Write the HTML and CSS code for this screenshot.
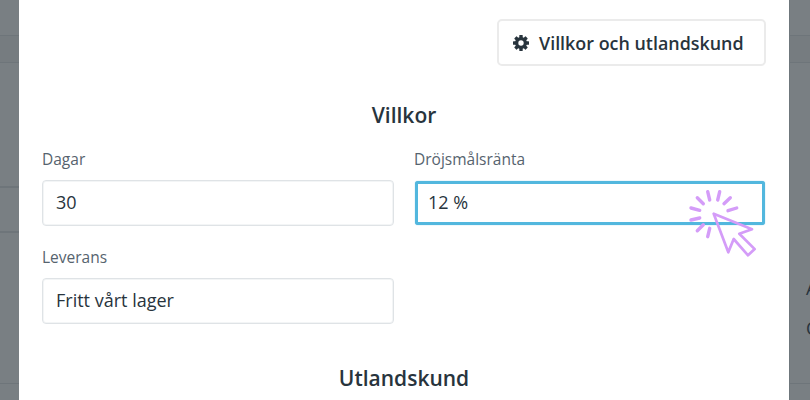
FILE: index.html
```html
<!DOCTYPE html>
<html lang="sv">
  <head>
    <meta charset="UTF-8" />
    <meta name="viewport" content="width=device-width, initial-scale=1.0" />
    <link rel="stylesheet" href="styles.css">
    <title>Villkor och utlandskund</title>
  </head>

  <body>
    <!-- Dimmed page behind the modal -->
    <div class="backdrop left">
      <div class="row header"></div>
      <div class="row toolbar"></div>
      <div class="row intro"></div>
      <div class="row heading"></div>
      <div class="row content"></div>
    </div>

    <div class="modal">
      <div class="actions">
        <button type="button" class="btn">
          <svg class="gear" viewBox="-8 -8 16 16">
            <g fill="currentColor">
              <rect x="-1.7" y="-8" width="3.4" height="16" rx="0.5" />
              <rect x="-1.7" y="-8" width="3.4" height="16" rx="0.5" transform="rotate(45)" />
              <rect x="-1.7" y="-8" width="3.4" height="16" rx="0.5" transform="rotate(90)" />
              <rect x="-1.7" y="-8" width="3.4" height="16" rx="0.5" transform="rotate(135)" />
              <circle r="6" />
            </g>
            <circle r="2.7" fill="#fff" />
          </svg>
          <span>Villkor och utlandskund</span>
        </button>
      </div>

      <h2>Villkor</h2>
      <form class="fields">
        <div class="field">
          <label for="dagar">Dagar</label>
          <input type="text" id="dagar" value="30" />
        </div>
        <div class="field">
          <label for="ranta">Dröjsmålsränta</label>
          <input type="text" id="ranta" class="active" value="12 %" />
        </div>
        <div class="field">
          <label for="leverans">Leverans</label>
          <input type="text" id="leverans" value="Fritt vårt lager" />
        </div>
      </form>

      <h2>Utlandskund</h2>
    </div>

    <div class="backdrop right">
      <div class="row header"></div>
      <div class="row toolbar"></div>
      <div class="row content">
        <p>A</p>
        <p>O</p>
      </div>
    </div>

    <svg class="pointer" viewBox="0 0 75 75">
      <path class="rays" d="M22.7 6.7l2 8.3M34.7 6.7l-2 8.3M45.3 12.7l-6.3 6M51.7 23l-8.7 2.7M12.3 12.7l6 6M6 23l8.7 2.3M6 35l8.7-2M12.3 45.7l6-6M22.7 51.7l2-8.4" />
      <path class="arrow" d="M28.7 28.7L67 44.3l-12.7 4.4 15.4 15.4-6.7 6.2L48.7 54l-5.4 13.3z" />
    </svg>
  </body>
</html>
```

FILE: styles.css
```css
* {
  box-sizing: border-box;
}

body {
  margin: 0;
  display: flex;
  height: 400px;
  overflow: hidden;
  background-color: #797f83;
  color: #28343d;
  font-family: "Open Sans", sans-serif;
}

.backdrop {
  display: flex;
  flex-direction: column;
  flex: none;
  width: 19px;
  overflow: hidden;
}

.backdrop.right {
  width: 21px;
  border-left: 1px solid #6f777c;
}

.row {
  flex: none;
  border-bottom: 1px solid #6e757a;
}

.header {
  height: 36px;
}

.toolbar {
  height: 27px;
  background-color: #767c80;
}

.intro {
  height: 125px;
  border-bottom-width: 2px;
}

.heading {
  height: 45px;
  border-bottom-width: 2px;
}

.left .content {
  height: 151px;
}

.right .content {
  height: 321px;
  padding: 205px 0 0 16px;
}

.row p {
  margin: 0;
  font-size: 18px;
  line-height: 40px;
  white-space: nowrap;
}

.modal {
  flex: none;
  width: 770px;
  padding: 19px 23px 0;
  background-color: #fff;
}

.actions {
  display: flex;
  justify-content: flex-end;
}

.btn {
  display: flex;
  align-items: center;
  gap: 10px;
  width: 269px;
  height: 47px;
  padding: 0 0 0 14px;
  border: 2px solid #ebebeb;
  border-radius: 5px;
  background-color: #fff;
  color: inherit;
  font: 600 17.9px "Open Sans", sans-serif;
  white-space: nowrap;
}

.gear {
  width: 16px;
  height: 16px;
}

h2 {
  margin: 35px 0 0;
  font-size: 21px;
  font-weight: 600;
  line-height: 28px;
  text-align: center;
}

.fields {
  display: grid;
  grid-template-columns: 352px 352px;
  column-gap: 20px;
  row-gap: 19px;
  margin-top: 18px;
}

.field {
  display: flex;
  flex-direction: column;
}

label {
  margin-bottom: 9px;
  color: #56636e;
  font-size: 15.5px;
  line-height: 24px;
}

input {
  width: 100%;
  height: 46px;
  padding: 0 13px 2px;
  border: 1px solid #dfe3e6;
  border-radius: 4px;
  box-shadow: inset 0 0 0 1px #f3f5f6;
  outline: none;
  background-color: #fff;
  color: inherit;
  font: 18px "Open Sans", sans-serif;
}

.active {
  width: 350px;
  height: 44px;
  margin: 1px 0 1px 1px;
  padding: 0 10px 2px;
  border: 3px solid #52b7de;
  border-radius: 3px;
  box-shadow: 0 0 1px #52b7de;
}

.fields + h2 {
  margin-top: 40px;
}

.pointer {
  position: absolute;
  left: 685px;
  top: 185px;
  width: 75px;
  height: 75px;
  fill: none;
  stroke: #d49cf8;
}

.rays {
  stroke-width: 3.4;
  stroke-linecap: round;
}

.arrow {
  stroke-width: 2.7;
  stroke-linejoin: round;
}
```
